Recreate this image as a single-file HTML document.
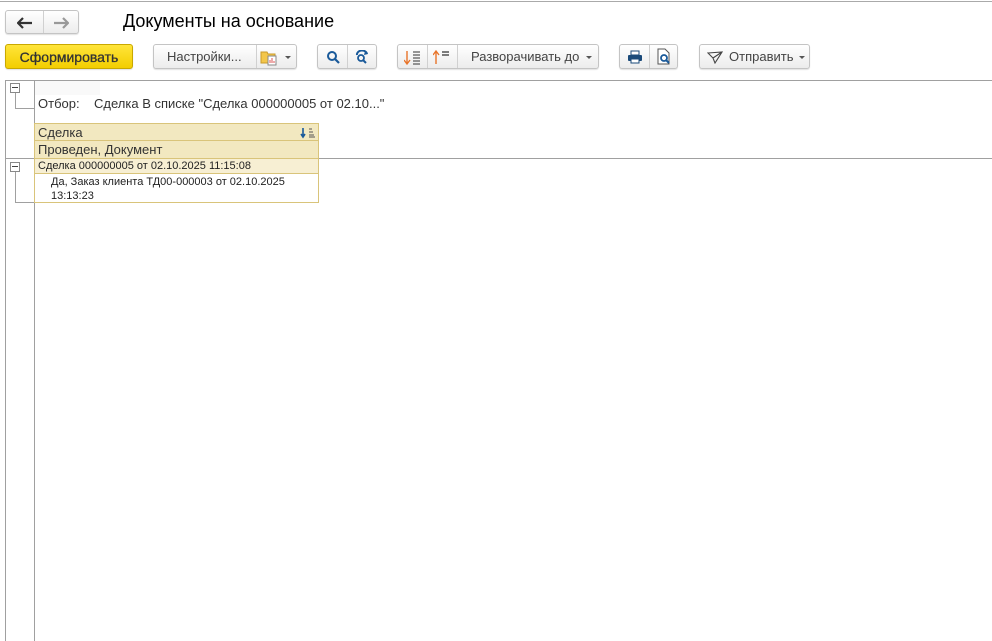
<!DOCTYPE html>
<html><head><meta charset="utf-8"><style>
*{margin:0;padding:0;box-sizing:border-box}
body{width:992px;height:641px;background:#fff;font-family:"Liberation Sans",Arial,sans-serif;position:relative;overflow:hidden;color:#333}
.a{position:absolute}
.btn{position:absolute;height:25px;border:1px solid #c4c4c4;border-radius:3px;background:linear-gradient(#fff,#ececec);box-shadow:0 1px 1px rgba(0,0,0,.12);font-size:13px;color:#444;display:flex;align-items:center}
.sep{position:absolute;top:0;bottom:0;width:1px;background:#d0d0d0}
.caret{width:0;height:0;border-left:3px solid transparent;border-right:3px solid transparent;border-top:3px solid #555;display:inline-block}
.hl{position:absolute;height:1px;background:#a0a0a0}
.vl{position:absolute;width:1px;background:#a0a0a0}
.tog{position:absolute;width:10px;height:10px;border:1px solid #888;background:#fff}
.tog:after{content:"";position:absolute;left:1px;top:3px;width:6px;height:1px;background:#444}
</style></head><body>
<div class="hl" style="left:0;top:1px;width:992px;background:#aaa"></div>

<div class="btn" style="left:5px;top:10px;width:74px;height:24px">
 <svg class="a" style="left:11px;top:6px" width="16" height="12"><path d="M1 6H15M6 1L1 6L6 11" stroke="#333" stroke-width="2.2" fill="none"/></svg>
 <div class="sep" style="left:37px"></div>
 <svg class="a" style="left:47px;top:6px" width="16" height="12"><path d="M1 6H15M10 1L15 6L10 11" stroke="#999" stroke-width="2.2" fill="none"/></svg>
</div>
<div class="a" style="left:123px;top:11px;font-size:18px;color:#000">Документы на основание</div>

<div class="btn" style="left:5px;top:44px;width:128px;background:linear-gradient(#ffe53a,#f3ce00);border-color:#c9a800;color:#333;justify-content:center;font-size:14px;-webkit-text-stroke:0.3px #333">Сформировать</div>

<div class="btn" style="left:153px;top:44px;width:144px">
 <span style="margin-left:13px">Настройки...</span>
 <div class="sep" style="left:102px"></div>
 <svg class="a" style="left:106px;top:4px" width="20" height="17"><path d="M1 3h6l1 2h7v9H1z" fill="#f3c64a" stroke="#c99a2a"/><rect x="8" y="7" width="8" height="9" fill="#fff" stroke="#888"/><path d="M10 14v-3M12 14v-5M14 14v-2" stroke="#d55"/></svg>
 <span class="caret a" style="left:131px;top:11px"></span>
</div>

<div class="btn" style="left:317px;top:44px;width:60px">
 <svg class="a" style="left:8px;top:5px" width="14" height="14"><circle cx="6" cy="6" r="4" stroke="#1a5a9a" stroke-width="2" fill="none"/><path d="M9 9l4 4" stroke="#1a5a9a" stroke-width="2.2"/></svg>
 <div class="sep" style="left:29px"></div>
 <svg class="a" style="left:37px;top:5px" width="16" height="14"><path d="M2 5a5 4 0 0 1 10-1" stroke="#1a5a9a" stroke-width="2" fill="none"/><path d="M10 1l3 3-4 1" fill="#1a5a9a"/><circle cx="6" cy="8" r="3" stroke="#1a5a9a" stroke-width="1.8" fill="none"/><path d="M8 10l3 3" stroke="#1a5a9a" stroke-width="2"/></svg>
</div>

<div class="btn" style="left:397px;top:44px;width:202px">
 <svg class="a" style="left:6px;top:4px" width="18" height="17"><path d="M3 2v12M0 11l3 4 3-4" stroke="#e8742a" stroke-width="1.4" fill="none"/><path d="M9 3h7M9 6h7M9 9h7M9 12h7M9 15h7" stroke="#333"/></svg>
 <div class="sep" style="left:29px"></div>
 <svg class="a" style="left:35px;top:4px" width="18" height="17"><path d="M3 15V3M0 6l3-4 3 4" stroke="#e8742a" stroke-width="1.4" fill="none"/><path d="M9 3h7M9 6h7" stroke="#333" stroke-width="1.2"/></svg>
 <div class="sep" style="left:59px"></div>
 <span style="margin-left:73px">Разворачивать до</span>
 <span class="caret a" style="left:188px;top:11px"></span>
</div>

<div class="btn" style="left:619px;top:44px;width:59px">
 <svg class="a" style="left:7px;top:5px" width="16" height="14"><rect x="4" y="1" width="8" height="4" fill="#fff" stroke="#1a4a7a"/><rect x="1" y="5" width="14" height="6" rx="1" fill="#1a4a7a"/><rect x="4" y="9" width="8" height="4" fill="#fff" stroke="#1a4a7a"/></svg>
 <div class="sep" style="left:29px"></div>
 <svg class="a" style="left:36px;top:3px" width="16" height="18"><path d="M2 1h7l4 4v11H2z" fill="#fff" stroke="#555"/><circle cx="8" cy="10" r="3" stroke="#1a5a9a" stroke-width="1.8" fill="none"/><path d="M10 12l3 3" stroke="#1a5a9a" stroke-width="2"/></svg>
</div>

<div class="btn" style="left:699px;top:44px;width:111px">
 <svg class="a" style="left:7px;top:6px" width="16" height="13"><path d="M1 2L15 1L8 12L6 7z M6 7L15 1" stroke="#444" stroke-width="1.1" fill="none"/></svg>
 <span style="margin-left:29px">Отправить</span>
 <span class="caret a" style="left:99px;top:11px"></span>
</div>

<!-- report area -->
<div class="hl" style="left:5px;top:80px;width:987px"></div>
<div class="vl" style="left:5px;top:80px;height:561px"></div>
<div class="vl" style="left:34px;top:80px;height:561px"></div>
<div class="hl" style="left:5px;top:158px;width:987px"></div>
<div class="a" style="left:35px;top:81px;width:65px;height:14px;background:#f9f9f9"></div>

<div class="tog" style="left:10px;top:83px"></div>
<div class="vl" style="left:15px;top:93px;height:15px"></div>
<div class="hl" style="left:15px;top:108px;width:19px"></div>
<div class="a" style="left:38px;top:96px;font-size:13px;color:#333">Отбор:&nbsp;&nbsp;&nbsp; Сделка В списке "Сделка 000000005 от 02.10..."</div>

<div class="a" style="left:34px;top:123px;width:285px;height:80px;border:1px solid #d9c47a"></div>
<div class="a" style="left:34px;top:123px;width:285px;height:18px;background:#f2e8c0;border:1px solid #d9c47a;font-size:13px;padding:1px 3px;color:#333">Сделка</div>
<svg class="a" style="left:300px;top:127px" width="16" height="12"><path d="M3 1v8M1 7l2 3 2-3" stroke="#1a5a9a" stroke-width="1.6" fill="none"/><path d="M9 2h3M9 5h4M9 8h5M9 10h6" stroke="#555"/></svg>
<div class="a" style="left:34px;top:141px;width:285px;height:18px;background:#f2e8c0;border:1px solid #d9c47a;border-top:none;font-size:13px;padding:1px 3px;color:#333">Проведен, Документ</div>
<div class="a" style="left:34px;top:159px;width:285px;height:15px;background:#f7efd3;border:1px solid #d9c47a;border-top:none;font-size:11px;padding:1px 3px;color:#222">Сделка 000000005 от 02.10.2025 11:15:08</div>
<div class="a" style="left:51px;top:175px;font-size:11px;color:#222;line-height:14px">Да, Заказ клиента ТД00-000003 от 02.10.2025<br>13:13:23</div>
<div class="tog" style="left:10px;top:162px"></div>
<div class="vl" style="left:15px;top:172px;height:30px"></div>
<div class="hl" style="left:15px;top:202px;width:19px"></div>
</body></html>
